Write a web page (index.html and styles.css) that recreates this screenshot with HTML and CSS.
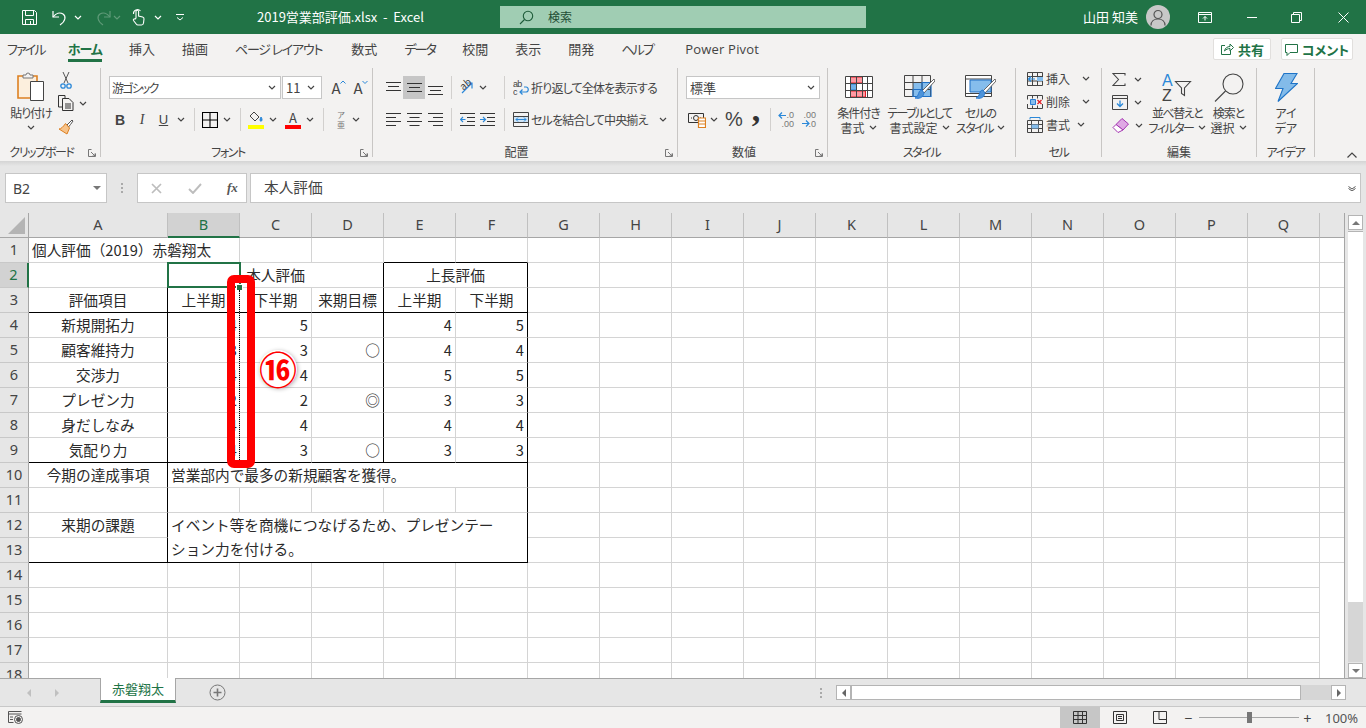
FILE: index.html
```html
<!DOCTYPE html>
<html lang="ja">
  <head>
    <meta charset="UTF-8" />
    <title>2019営業部評価.xlsx - Excel</title>
    <link rel="stylesheet" href="styles.css">
  </head>
  <body>
    <svg class="defs" width="0" height="0">
      <symbol id="chev" viewBox="0 0 8 5"><path d="M1 1l3 3 3-3" fill="none" stroke="#444" stroke-width="1.2"/></symbol>
      <symbol id="chevw" viewBox="0 0 8 5"><path d="M1 1l3 3 3-3" fill="none" stroke="#fff" stroke-width="1.2"/></symbol>
    </svg>

    <!-- タイトルバー -->
    <header class="titlebar">
      <div class="qat">
        <svg class="q-save" width="17" height="17" viewBox="0 0 17 17" fill="none" stroke="#fff"><path d="M1.5 1.5h12l2 2v12h-14z"/><path d="M4.5 1.5v5h8v-5M4.5 15.5v-5h8v5M9.5 12v3"/></svg>
        <svg class="q-undo" width="19" height="17" viewBox="0 0 19 17" fill="none" stroke="#fff" stroke-width="1.2"><path d="M2 2v6h6"/><path d="M2 8c3-4 7-5 10-3 3 2 3 7-3 11"/></svg>
        <svg class="q-c1" width="8" height="5"><use href="#chevw"/></svg>
        <svg class="q-redo" width="19" height="17" viewBox="0 0 19 17" fill="none" stroke="#5f9a78" stroke-width="1.2"><path d="M17 2v6h-6"/><path d="M17 8c-3-4-7-5-10-3-3 2-3 7 3 11"/></svg>
        <svg class="q-c2" width="8" height="5" viewBox="0 0 8 5"><path d="M1 1l3 3 3-3" fill="none" stroke="#5f9a78" stroke-width="1.2"/></svg>
        <svg class="q-touch" width="13" height="18" viewBox="0 0 13 18" fill="none" stroke="#fff" stroke-width="1.1"><path d="M1.5 6a4 4 0 0 1 7-3"/><path d="M4 10V3.5a1.3 1.3 0 0 1 2.6 0V8l4 1c1 .3 1.5 1 1.4 2l-.5 4c-.1 1-1 2-2 2H6c-.8 0-1.400-.4-1.800-1L1.500 12.500c-.6-1 .6-2.200 1.600-1.400z"/></svg>
        <svg class="q-c3" width="8" height="5"><use href="#chevw"/></svg>
        <svg class="q-more" width="8" height="8" viewBox="0 0 8 8" fill="none" stroke="#fff"><path d="M0 1.500h8M1 4.500l3 2.500 3-2.500"/></svg>
      </div>
      <div class="doc-title">2019営業部評価.xlsx&nbsp; - &nbsp;Excel</div>
      <div class="searchbox">
        <svg width="15" height="15" viewBox="0 0 15 15" fill="none" stroke="#1f5c3a" stroke-width="1.1"><circle cx="9" cy="6" r="4.700"/><path d="M5.500 9.500L1 14"/></svg>
        <span>検索</span>
      </div>
      <div class="user">山田 知美</div>
      <div class="avatar">
        <svg width="16" height="17" viewBox="0 0 16 17" fill="none" stroke="#555" stroke-width="1.2"><circle cx="8" cy="5.500" r="4"/><path d="M1 16.500c0-4 3-6.500 7-6.500s7 2.500 7 6.500"/></svg>
      </div>
      <div class="winbtns">
        <svg class="w-ribbon" width="14" height="11" viewBox="0 0 14 11" fill="none" stroke="#fff"><path d="M.5 .5h13v10H.5zM.5 2.500h13M7 8.500V4.500M5 6.500l2-2 2 2"/></svg>
        <svg class="w-min" width="10" height="1"><path d="M0 .5h10" stroke="#fff"/></svg>
        <svg class="w-max" width="11" height="11" viewBox="0 0 11 11" fill="none" stroke="#fff"><path d="M.5 2.500h8v8h-8zM2.500 2.500v-2h8v8h-2"/></svg>
        <svg class="w-close" width="11" height="11" viewBox="0 0 11 11" fill="none" stroke="#fff"><path d="M.5 .5l10 10M10.500 .5l-10 10"/></svg>
      </div>
    </header>

    <!-- タブ -->
    <nav class="tabs">
      <span class="k2">ファイル</span>
      <span class="tab-on">ホーム</span>
      <span>挿入</span>
      <span>描画</span>
      <span class="k1">ページ レイアウト</span>
      <span class="tab-su">数式</span>
      <span class="k2">データ</span>
      <span>校閲</span>
      <span>表示</span>
      <span>開発</span>
      <span class="k2">ヘルプ</span>
      <span class="tab-pp">Power Pivot</span>
      <div class="tab-right">
        <button class="share">
          <svg width="14" height="14" viewBox="0 0 14 14" fill="none" stroke="#217346"><path d="M5 3.500H1.500v9h9V9"/><path d="M4.500 9c.5-3 3-4.500 5.500-4.500V2l3.500 3.500L10 9V6.500c-2 0-4 1-5.500 2.500z"/></svg>
          共有
        </button>
        <button class="comment">
          <svg width="13" height="13" viewBox="0 0 13 13" fill="none" stroke="#217346"><path d="M.5 1.500h12v8H5l-3 3v-3H.5z"/></svg>
          コメント
        </button>
      </div>
    </nav>

    <!-- リボン -->
    <section class="ribbon">
      <div class="group g-clip">
        <div class="body body-row">
          <div class="stack w50">
            <div class="stack-ic">
              <svg width="28" height="30" viewBox="0 0 28 30"><path d="M1 4h19v22H1z" fill="#fcefdd" stroke="#dd8021" stroke-width="1.600"/><path d="M6 5V3h3a2 2 0 0 1 4 0h3v3H6z" fill="#f3f2f1" stroke="#777"/><path d="M13.500 9.500h13v19h-13z" fill="#fff" stroke="#444"/></svg>
            </div>
            <div class="stack-t">貼り付け</div>
            <div class="stack-t"><svg width="8" height="5"><use href="#chev"/></svg></div>
          </div>
          <div class="mini">
            <div class="mini-row"><svg class="ml2" width="12" height="18" viewBox="0 0 12 18" fill="none"><path d="M3 1l5 11M9 1L4 12" stroke="#555"/><circle cx="3" cy="15" r="2.200" stroke="#2b88d8" stroke-width="1.300"/><circle cx="9" cy="15" r="2.200" stroke="#2b88d8" stroke-width="1.300"/></svg></div>
            <div class="mini-row"><svg width="16" height="16" viewBox="0 0 16 16" fill="none" stroke="#333"><path d="M4 12H.5V.5H7V3"/><path d="M4.500 3.500H11l4 4v8H4.500zM7 9h6M7 11h6M7 13h6" fill="#f3f2f1"/></svg><svg class="ml5" width="8" height="5"><use href="#chev"/></svg></div>
            <div class="mini-row"><svg width="16" height="16" viewBox="0 0 16 16"><path d="M9 6l2-2 3-3 1 1-2.500 3.500L10.500 8z" fill="#fff" stroke="#555"/><path d="M7.500 4.500L11.500 9 9 15 1 10c2 0 4-2 6.500-5.500z" fill="#f7c38a" stroke="#dd8021"/></svg></div>
          </div>
        </div>
        <div class="glabel has-launch kana">クリップボード<svg class="launch" width="8" height="8" viewBox="0 0 8 8" fill="none" stroke="#777"><path d="M.5 .5h3M.5 .5v7h7v-3M3 3l4 4M4.500 7H7V4.500"/></svg></div>
      </div>

      <div class="group g-font">
        <div class="body">
          <div class="row">
            <div class="combo c-font"><span>游ゴシック</span><svg width="8" height="5"><use href="#chev"/></svg></div>
            <div class="combo c-size">11<svg width="8" height="5"><use href="#chev"/></svg></div>
            <div class="t w22 ml3 big-a">A<svg class="caret" width="6" height="4" viewBox="0 0 6 4" fill="none" stroke="#2b88d8"><path d="M.5 3.500L3 1l2.500 2.500"/></svg></div>
            <div class="t w22 big-a">A<svg class="caret" width="6" height="4" viewBox="0 0 6 4" fill="none" stroke="#2b88d8"><path d="M.5 1L3 3.500 5.500 1"/></svg></div>
          </div>
          <div class="row row2">
            <div class="t w22 fb">B</div>
            <div class="t w22 fi">I</div>
            <div class="t w21 fu">U</div>
            <div class="t w14"><svg width="8" height="5"><use href="#chev"/></svg></div>
            <i class="sep ml6"></i>
            <div class="t w17 ml6"><svg width="16" height="16" viewBox="0 0 16 16" fill="none" stroke="#000" stroke-width="1.100"><path d="M.5 .5h15v15H.5zM8 .5v15M.5 8h15"/></svg></div>
            <div class="t w18"><svg width="8" height="5"><use href="#chev"/></svg></div>
            <i class="sep ml4"></i>
            <div class="t w18 ml6 swatch">
              <svg width="14" height="12" viewBox="0 0 14 12" fill="none" stroke="#444"><path d="M5 1l5 5-4 4-5-5z"/><path d="M12 6c1 1.500 1.500 3 .5 4s-1.500-.5-1.500-1.500z" fill="#2b88d8" stroke="#2b88d8"/></svg>
              <b class="bar yellow"></b>
            </div>
            <div class="t w16"><svg width="8" height="5"><use href="#chev"/></svg></div>
            <div class="t w24 swatch"><span class="fa">A</span><b class="bar red"></b></div>
            <div class="t w10"><svg width="8" height="5"><use href="#chev"/></svg></div>
            <i class="sep ml8"></i>
            <div class="t w18 ml8 furi"><span>ア</span><span>亜</span></div>
            <div class="t w12"><svg width="8" height="5"><use href="#chev"/></svg></div>
          </div>
        </div>
        <div class="glabel has-launch kana">フォント<svg class="launch" width="8" height="8" viewBox="0 0 8 8" fill="none" stroke="#777"><path d="M.5 .5h3M.5 .5v7h7v-3M3 3l4 4M4.500 7H7V4.500"/></svg></div>
      </div>

      <div class="group g-align">
        <div class="body">
          <div class="row">
            <div class="t w20"><svg width="15" height="12" viewBox="0 0 15 12" stroke="#333"><path d="M0 .5h15M2 4.500h11M0 8.500h15"/></svg></div>
            <div class="t w22 on"><svg width="15" height="12" viewBox="0 0 15 12" stroke="#333"><path d="M0 1.500h15M2 5.500h11M0 9.500h15"/></svg></div>
            <div class="t w20"><svg class="dn" width="15" height="12" viewBox="0 0 15 12" stroke="#333"><path d="M0 3.500h15M2 7.500h11M0 11.500h15"/></svg></div>
            <i class="sep ml6"></i>
            <div class="t w18 ml6 orient"><span>ab</span><svg width="14" height="14" viewBox="0 0 14 14" fill="none" stroke="#2b88d8" stroke-width="1.200"><path d="M2 12L12 2M6.500 2H12v5.500"/></svg></div>
            <div class="t w14"><svg width="8" height="5"><use href="#chev"/></svg></div>
            <i class="sep ml14"></i>
            <div class="wide ml8">
              <svg width="16" height="17" viewBox="0 0 16 17" fill="none"><text x="0" y="8" class="ab">ab</text><text x="0" y="16" class="ab">c</text><path d="M7 13h6c3 0 3-5 0-5h-2M9.500 10.500L7 13l2.500 2.500" stroke="#2b88d8" stroke-width="1.200"/></svg>
              <span>折り返して全体を表示する</span>
            </div>
          </div>
          <div class="row row2">
            <div class="t w20"><svg width="15" height="13" viewBox="0 0 15 13" stroke="#333"><path d="M0 .5h15M0 4.500h10M0 8.500h15M0 12.500h10"/></svg></div>
            <div class="t w22"><svg width="15" height="13" viewBox="0 0 15 13" stroke="#333"><path d="M0 .5h15M2.500 4.500h10M0 8.500h15M2.500 12.500h10"/></svg></div>
            <div class="t w20"><svg width="15" height="13" viewBox="0 0 15 13" stroke="#333"><path d="M0 .5h15M5 4.500h10M0 8.500h15M5 12.500h10"/></svg></div>
            <i class="sep ml6"></i>
            <div class="t w18 ml6"><svg width="15" height="13" viewBox="0 0 15 13" fill="none"><path d="M0 .5h15M7 4.500h8M7 8.500h8M0 12.500h15" stroke="#333"/><path d="M5.500 6.500H.5M3 4L.5 6.500 3 9" stroke="#2b88d8" stroke-width="1.200"/></svg></div>
            <div class="t w22"><svg width="15" height="13" viewBox="0 0 15 13" fill="none"><path d="M0 .5h15M7 4.500h8M7 8.500h8M0 12.500h15" stroke="#333"/><path d="M0 6.500h5M3 4l2.500 2.500L3 9" stroke="#2b88d8" stroke-width="1.200"/></svg></div>
            <i class="sep ml6"></i>
            <div class="wide ml8">
              <svg width="16" height="15" viewBox="0 0 16 15" fill="none"><path d="M.5 .5h15v14H.5z" stroke="#444"/><path d="M1 4.500h14M1 10.500h14" stroke="#444"/><path d="M1 5h14v5H1z" fill="#cfe4f6"/><path d="M3 7.500h10M5 5.500l-2 2 2 2M11 5.500l2 2-2 2" stroke="#2b88d8"/></svg>
              <span>セルを結合して中央揃え</span>
              <svg class="ml9" width="8" height="5"><use href="#chev"/></svg>
            </div>
          </div>
        </div>
        <div class="glabel has-launch">配置<svg class="launch" width="8" height="8" viewBox="0 0 8 8" fill="none" stroke="#777"><path d="M.5 .5h3M.5 .5v7h7v-3M3 3l4 4M4.500 7H7V4.500"/></svg></div>
      </div>

      <div class="group g-num">
        <div class="body">
          <div class="row">
            <div class="combo c-num">標準<svg width="8" height="5"><use href="#chev"/></svg></div>
          </div>
          <div class="row row2">
            <div class="t w22"><svg width="18" height="16" viewBox="0 0 18 16" fill="none"><path d="M.5 1.500h15v9H.5z" stroke="#333"/><circle cx="8" cy="6" r="2.500" stroke="#333"/><path d="M3 6h1M12 6h1" stroke="#333"/><path d="M10.500 6h7v9.500h-7z" fill="#fff" stroke="#dd8021" stroke-width="1.200"/><path d="M11 9h6M11 12h6" stroke="#dd8021"/></svg></div>
            <div class="t w12"><svg width="8" height="5"><use href="#chev"/></svg></div>
            <div class="t w22 ml3 pct">%</div>
            <div class="t w22 comma">,</div>
            <i class="sep ml3"></i>
            <div class="t w22 ml4 dec"><span class="dec-t"><span>.0</span><span>.00</span></span><svg class="dec-a" width="9" height="9" viewBox="0 0 9 9" fill="none" stroke="#2b88d8" stroke-width="1.200"><path d="M8 4.500H1M4 1.500l-3 3 3 3"/></svg></div>
            <div class="t w22 dec"><span class="dec-t"><span>.00</span><span>.0</span></span><svg class="dec-b" width="9" height="9" viewBox="0 0 9 9" fill="none" stroke="#2b88d8" stroke-width="1.200"><path d="M1 4.500h7M5 1.500l3 3-3 3"/></svg></div>
          </div>
        </div>
        <div class="glabel has-launch">数値<svg class="launch" width="8" height="8" viewBox="0 0 8 8" fill="none" stroke="#777"><path d="M.5 .5h3M.5 .5v7h7v-3M3 3l4 4M4.500 7H7V4.500"/></svg></div>
      </div>

      <div class="group g-style">
        <div class="body body-row">
          <div class="stack w61">
            <div class="stack-ic low">
              <svg width="28" height="22" viewBox="0 0 28 22"><path d="M.5 .5h27v21H.5z" fill="#fff"/><path d="M5.500 1h12v6h-12zM5.500 15h15v6h-15z" fill="#ff9aa2" stroke="#e01b24"/><path d="M5.500 8h6v6h-6z" fill="#6fb1e8" stroke="#2b7cd3"/><path d="M.5 .5h27v21H.5zM5.500 1v20M11.500 1v20M17.500 1v20M22.500 1v20M1 7.500h26M1 14.500h26" fill="none" stroke="#444"/></svg>
            </div>
            <div class="stack-t">条件付き</div>
            <div class="stack-t ls0">書式<svg class="ml4" width="8" height="5"><use href="#chev"/></svg></div>
          </div>
          <div class="stack w61">
            <div class="stack-ic low">
              <svg width="31" height="25" viewBox="0 0 31 25"><path d="M9 7h18v15H9z" fill="#85bdec"/><path d="M.5 .5h26v21H.5zM9 1v20M18 1v20M1 7.500h26M1 14.500h26" fill="none" stroke="#444"/><path d="M18 7.500h9v14H9v-7h9z" fill="none" stroke="#1f6fc4" stroke-width="1.200"/><path d="M30 4L18 16l2 2L31 6z" fill="#fff" stroke="#666"/><path d="M18 15c-3 0-3 3-4 5-.5 1.500-2 2.500-3 3 4 1 8 0 9-5z" fill="#4d93d9" stroke="#2b7cd3"/></svg>
            </div>
            <div class="stack-t tight">テーブルとして</div>
            <div class="stack-t ls0">書式設定<svg class="ml4" width="8" height="5"><use href="#chev"/></svg></div>
          </div>
          <div class="stack w61">
            <div class="stack-ic low">
              <svg width="31" height="25" viewBox="0 0 31 25"><path d="M.5 .5h26v21H.5z" fill="#fff" stroke="#444"/><path d="M1 4h25" stroke="#444"/><path d="M5 5h21v12H5z" fill="#85bdec" stroke="#1f6fc4"/><path d="M1 18.500h26" stroke="#444"/><path d="M30 4L18 16l2 2L31 6z" fill="#fff" stroke="#666"/><path d="M18 15c-3 0-3 3-4 5-.5 1.500-2 2.500-3 3 4 1 8 0 9-5z" fill="#4d93d9" stroke="#2b7cd3"/></svg>
            </div>
            <div class="stack-t">セルの</div>
            <div class="stack-t tight">スタイル<svg class="ml4" width="8" height="5"><use href="#chev"/></svg></div>
          </div>
        </div>
        <div class="glabel kana">スタイル</div>
      </div>

      <div class="group g-cell">
        <div class="body">
          <div class="cell-row">
            <svg width="16" height="14" viewBox="0 0 16 14" fill="none"><path d="M.5 .5h15v13H.5zM.5 4.500h15M.5 9h15M5.500 .5v13M10.500 .5v13" stroke="#444"/><path d="M10 5h6v4h-6z" fill="#85bdec"/><path d="M8 7H1.500M4 4.500L1.500 7 4 9.500" stroke="#2b88d8" stroke-width="1.200"/></svg>
            <span>挿入</span><svg class="ml9" width="8" height="5"><use href="#chev"/></svg>
          </div>
          <div class="cell-row">
            <svg width="16" height="14" viewBox="0 0 16 14" fill="none"><path d="M.5 .5h15M.5 13.500h15M.5 .5v4M15.500 .5v4M.5 9v4.500M15.500 9v4.500M5.500 .5v3M10.500 .5v3M5.500 10.500v3M10.500 10.500v3" stroke="#444"/><path d="M3.500 4.500h5v5h-5z" fill="#85bdec" stroke="#2b7cd3"/><path d="M10.500 5l4 4M14.500 5l-4 4" stroke="#e01b24" stroke-width="1.300"/></svg>
            <span>削除</span><svg class="ml9" width="8" height="5"><use href="#chev"/></svg>
          </div>
          <div class="cell-row">
            <svg width="16" height="16" viewBox="0 0 16 16" fill="none"><path d="M.5 3.500h15v12H.5zM.5 7.500h15M.5 11.500h15M4.500 3.500v12M11.500 3.500v12" stroke="#444"/><path d="M4.500 7.500h7v4h-7z" fill="#85bdec"/><path d="M3 .5h10M3 .5v2M13 .5v2" stroke="#2b88d8"/></svg>
            <span>書式</span><svg class="ml4" width="8" height="5"><use href="#chev"/></svg>
          </div>
        </div>
        <div class="glabel kana">セル</div>
      </div>

      <div class="group g-edit">
        <div class="body body-row">
          <div class="edit-left">
            <div class="cell-row">
              <svg width="14" height="13" viewBox="0 0 14 13" fill="none" stroke="#444" stroke-width="1.100"><path d="M13 2.500V.5H1l5.500 6-5.500 6h12v-2"/></svg>
              <svg class="ml5" width="8" height="5"><use href="#chev"/></svg>
            </div>
            <div class="cell-row">
              <svg width="16" height="15" viewBox="0 0 16 15" fill="none"><path d="M.5 .5h15v14H.5zM.5 3.500h15" stroke="#444"/><path d="M8 5.500v6M5 8.500l3 3 3-3" stroke="#2b88d8" stroke-width="1.300"/></svg>
              <svg class="ml3" width="8" height="5"><use href="#chev"/></svg>
            </div>
            <div class="cell-row">
              <svg width="17" height="15" viewBox="0 0 17 15"><path d="M10 .5L16.500 6 11 12 4 6.500z" fill="#dfa8e4" stroke="#a333b0"/><path d="M4 6.500L1 9.500 6 14.500 11 12z" fill="#fff" stroke="#a333b0"/></svg>
              <svg class="ml3" width="8" height="5"><use href="#chev"/></svg>
            </div>
          </div>
          <div class="stack w60">
            <div class="stack-ic">
              <svg class="sort-ic" width="30" height="29" viewBox="0 0 30 29" fill="none"><text x="0" y="13" class="az blue">A</text><text x="0" y="28" class="az">Z</text><path d="M13.500 8.500h15l-6 6.500v7.500l-3-2V15z" stroke="#444" stroke-width="1.100"/></svg>
            </div>
            <div class="stack-t tight">並べ替えと</div>
            <div class="stack-t tight">フィルター<svg class="ml4" width="8" height="5"><use href="#chev"/></svg></div>
          </div>
          <div class="stack w43">
            <div class="stack-ic">
              <svg width="30" height="29" viewBox="0 0 30 29" fill="none" stroke="#444" stroke-width="1.100"><circle cx="19" cy="11" r="10"/><path d="M11.500 18L1 28.500"/></svg>
            </div>
            <div class="stack-t">検索と</div>
            <div class="stack-t ls0">選択<svg class="ml4" width="8" height="5"><use href="#chev"/></svg></div>
          </div>
        </div>
        <div class="glabel">編集</div>
      </div>

      <div class="group g-idea">
        <div class="body body-row">
          <div class="stack w58">
            <div class="stack-ic">
              <svg width="23" height="29" viewBox="0 0 23 29"><path d="M9 .5h13l-6 10h6.500L3 28.500l5-13H.5z" fill="#83bbe9" stroke="#1f74c7" stroke-width="1.100"/></svg>
            </div>
            <div class="stack-t ls0">アイ</div>
            <div class="stack-t ls0">デア</div>
          </div>
        </div>
        <div class="glabel kana">アイデア</div>
      </div>

      <svg class="collapse" width="10" height="6" viewBox="0 0 10 6" fill="none" stroke="#444" stroke-width="1.200"><path d="M.5 5.500L5 1l4.500 4.500"/></svg>
    </section>

    <!-- 数式バー -->
    <section class="formula">
      <div class="namebox"><span>B2</span><i class="tri"></i></div>
      <div class="fdots"><i></i><i></i><i></i></div>
      <div class="fbtns">
        <svg width="11" height="11" viewBox="0 0 11 11" stroke="#bdbdbd" stroke-width="1.700"><path d="M1 1l9 9M10 1l-9 9"/></svg>
        <svg width="14" height="11" viewBox="0 0 14 11" fill="none" stroke="#bdbdbd" stroke-width="1.900"><path d="M1 6l4 4 8-9"/></svg>
        <span class="fx">fx</span>
      </div>
      <div class="finput"><span>本人評価</span><svg width="8" height="5" viewBox="0 0 8 5"><path d="M.5 .5L4 3l3.500-2.500M.5 2.500L4 5l3.500-2.500" fill="none" stroke="#555"/></svg></div>
    </section>

    <!-- シート -->
    <section class="workarea">
      <div class="sheet">
        <table class="grid">
          <colgroup>
            <col class="col-rh"><col class="col-a">
            <col class="col"><col class="col"><col class="col"><col class="col"><col class="col">
            <col class="col"><col class="col"><col class="col"><col class="col"><col class="col"><col class="col">
            <col class="col"><col class="col"><col class="col"><col class="col"><col class="col"><col class="col">
          </colgroup>
          <thead>
            <tr><th class="corner"><i></i></th><th>A</th><th class="sel-col">B</th><th>C</th><th>D</th><th>E</th><th>F</th><th>G</th><th>H</th><th>I</th><th>J</th><th>K</th><th>L</th><th>M</th><th>N</th><th>O</th><th>P</th><th>Q</th><th></th></tr>
          </thead>
          <tbody>
            <tr><th>1</th><td colspan="2">個人評価（2019）赤磐翔太</td><td></td><td></td><td class="bb"></td><td class="bb"></td><td></td><td></td><td></td><td></td><td></td><td></td><td></td><td></td><td></td><td></td><td></td><td></td></tr>
            <tr><th class="sel-row">2</th><td></td><td colspan="3" class="c br">本人評価</td><td colspan="2" class="c br">上長評価</td><td></td><td></td><td></td><td></td><td></td><td></td><td></td><td></td><td></td><td></td><td></td><td></td></tr>
            <tr><th>3</th><td class="c bb br">評価項目</td><td class="c bb">上半期</td><td class="c bb">下半期</td><td class="c bb br">来期目標</td><td class="c bb">上半期</td><td class="c bb br">下半期</td><td></td><td></td><td></td><td></td><td></td><td></td><td></td><td></td><td></td><td></td><td></td><td></td></tr>
            <tr><th>4</th><td class="c br">新規開拓力</td><td class="r">4</td><td class="r">5</td><td class="r br"></td><td class="r">4</td><td class="r br">5</td><td></td><td></td><td></td><td></td><td></td><td></td><td></td><td></td><td></td><td></td><td></td><td></td></tr>
            <tr><th>5</th><td class="c br">顧客維持力</td><td class="r">3</td><td class="r">3</td><td class="r br">○</td><td class="r">4</td><td class="r br">4</td><td></td><td></td><td></td><td></td><td></td><td></td><td></td><td></td><td></td><td></td><td></td><td></td></tr>
            <tr><th>6</th><td class="c br">交渉力</td><td class="r">4</td><td class="r">4</td><td class="r br"></td><td class="r">5</td><td class="r br">5</td><td></td><td></td><td></td><td></td><td></td><td></td><td></td><td></td><td></td><td></td><td></td><td></td></tr>
            <tr><th>7</th><td class="c br">プレゼン力</td><td class="r">2</td><td class="r">2</td><td class="r br">◎</td><td class="r">3</td><td class="r br">3</td><td></td><td></td><td></td><td></td><td></td><td></td><td></td><td></td><td></td><td></td><td></td><td></td></tr>
            <tr><th>8</th><td class="c br">身だしなみ</td><td class="r">4</td><td class="r">4</td><td class="r br"></td><td class="r">4</td><td class="r br">4</td><td></td><td></td><td></td><td></td><td></td><td></td><td></td><td></td><td></td><td></td><td></td><td></td></tr>
            <tr><th>9</th><td class="c bb br">気配り力</td><td class="r bb">4</td><td class="r bb">3</td><td class="r bb br">○</td><td class="r bb">3</td><td class="r bb br">3</td><td></td><td></td><td></td><td></td><td></td><td></td><td></td><td></td><td></td><td></td><td></td><td></td></tr>
            <tr><th>10</th><td class="c br">今期の達成事項</td><td colspan="5" class="br">営業部内で最多の新規顧客を獲得。</td><td></td><td></td><td></td><td></td><td></td><td></td><td></td><td></td><td></td><td></td><td></td><td></td></tr>
            <tr><th>11</th><td class="br"></td><td></td><td></td><td></td><td></td><td class="br"></td><td></td><td></td><td></td><td></td><td></td><td></td><td></td><td></td><td></td><td></td><td></td><td></td></tr>
            <tr><th>12</th><td class="c br">来期の課題</td><td colspan="5" rowspan="2" class="br bb">イベント等を商機につなげるため、プレゼンテー<br>ション力を付ける。</td><td></td><td></td><td></td><td></td><td></td><td></td><td></td><td></td><td></td><td></td><td></td><td></td></tr>
            <tr><th>13</th><td class="bb br"></td><td></td><td></td><td></td><td></td><td></td><td></td><td></td><td></td><td></td><td></td><td></td><td></td></tr>
            <tr><th>14</th><td></td><td></td><td></td><td></td><td></td><td></td><td></td><td></td><td></td><td></td><td></td><td></td><td></td><td></td><td></td><td></td><td></td></tr>
            <tr><th>15</th><td></td><td></td><td></td><td></td><td></td><td></td><td></td><td></td><td></td><td></td><td></td><td></td><td></td><td></td><td></td><td></td><td></td></tr>
            <tr><th>16</th><td></td><td></td><td></td><td></td><td></td><td></td><td></td><td></td><td></td><td></td><td></td><td></td><td></td><td></td><td></td><td></td><td></td></tr>
            <tr><th>17</th><td></td><td></td><td></td><td></td><td></td><td></td><td></td><td></td><td></td><td></td><td></td><td></td><td></td><td></td><td></td><td></td><td></td></tr>
            <tr><th>18</th><td></td><td></td><td></td><td></td><td></td><td></td><td></td><td></td><td></td><td></td><td></td><td></td><td></td><td></td><td></td><td></td><td></td></tr>
          </tbody>
        </table>
        <!-- 列幅ドラッグの表示と注釈 -->
        <div class="cursor-box"></div>
        <div class="fill-handle"></div>
        <div class="drag-line"></div>
        <div class="red-frame"></div>
        <div class="step">⑯</div>
      </div>
      <div class="vscroll">
        <div class="sb-btn"><i class="tri up"></i></div>
        <div class="sb-thumb"></div>
        <div class="sb-btn"><i class="tri"></i></div>
      </div>
    </section>

    <!-- シートタブ -->
    <section class="sheetbar">
      <div class="nav-arrows"><i class="arrow-l"></i><i class="arrow-r"></i></div>
      <div class="sheet-tab">赤磐翔太</div>
      <svg class="addsheet" width="17" height="17" viewBox="0 0 17 17" fill="none" stroke="#777"><circle cx="8.500" cy="8.500" r="7.500"/><path d="M8.500 4.500v8M4.500 8.500h8" stroke-width="1.600"/></svg>
      <div class="sb-dots"><i></i><i></i><i></i></div>
      <div class="hscroll">
        <div class="hs-btn"><i class="arrow-l dark"></i></div>
        <div class="hs-thumb"></div>
        <div class="hs-btn"><i class="arrow-r dark"></i></div>
      </div>
    </section>

    <!-- ステータスバー -->
    <footer class="statusbar">
      <svg class="macro" width="15" height="13" viewBox="0 0 15 13" fill="none" stroke="#555"><path d="M.5 .5h13M.5 3h13M.5 .5v11h5M2 6h3M2 8.500h3"/><circle cx="10.500" cy="8.500" r="4"/><circle cx="10.500" cy="8.500" r="2" fill="#555"/></svg>
      <div class="views">
        <div class="view on"><svg width="14" height="13" viewBox="0 0 14 13" fill="none" stroke="#333"><path d="M.5 .5h13v12H.5zM.5 4.500h13M.5 8.500h13M5 .5v12M9.500 .5v12"/></svg></div>
        <div class="view"><svg width="14" height="13" viewBox="0 0 14 13" fill="none" stroke="#333"><path d="M.5 .5h13v12H.5zM3.500 3.500h7v6h-7zM5 5.500h4M5 7.500h4"/></svg></div>
        <div class="view"><svg width="14" height="13" viewBox="0 0 14 13" fill="none" stroke="#333"><path d="M.5 .5h13v12H.5zM6 .5v8h7.500"/></svg></div>
      </div>
      <div class="zoom">
        <span class="z-btn">−</span>
        <div class="slider"><i></i></div>
        <span class="z-btn">+</span>
      </div>
      <div class="pct-t">100%</div>
    </footer>
  </body>
</html>
```

FILE: styles.css
```css
* {
  box-sizing: border-box;
}
html,
body {
  margin: 0;
  height: 100%;
}
body {
  width: 1366px;
  height: 728px;
  overflow: hidden;
  display: flex;
  flex-direction: column;
  background-color: #f3f2f1;
  color: #444;
  font-family: "Noto Sans CJK JP", "Noto Sans", sans-serif;
  font-size: 12px;
}
svg {
  display: block;
  flex: none;
}
.defs {
  position: absolute;
}

/* title bar */
.titlebar {
  height: 34px;
  flex: none;
  display: flex;
  align-items: center;
  background-color: #217346;
  color: #fff;
  font-size: 13px;
}
.qat {
  width: 257px;
  display: flex;
  align-items: center;
  padding-left: 21px;
}
.q-undo { margin-left: 13px; }
.q-c1 { margin-left: 4px; }
.q-redo { margin-left: 11px; }
.q-c2 { margin-left: 1px; }
.q-touch { margin-left: 11px; }
.q-c3 { margin-left: 9px; }
.q-more { margin-left: 14px; }
.doc-title {
  width: 243px;
  padding-bottom: 2px;
  white-space: nowrap;
}
.searchbox {
  width: 366px;
  height: 22px;
  display: flex;
  align-items: center;
  gap: 14px;
  padding-left: 19px;
  background-color: #a0cdb3;
  color: #1f4e35;
  font-size: 12px;
}
.searchbox span { padding-bottom: 2px; }
.user {
  margin-left: 217px;
  width: 63px;
  padding-bottom: 2px;
  white-space: nowrap;
}
.avatar {
  width: 24px;
  height: 24px;
  border-radius: 50%;
  background-color: #c8c8c8;
  display: flex;
  align-items: center;
  justify-content: center;
}
.winbtns {
  display: flex;
  align-items: center;
}
.w-ribbon { margin-left: 28px; }
.w-min { margin-left: 35px; }
.w-max { margin-left: 34px; }
.w-close { margin-left: 36px; }

/* tabs */
.tabs {
  height: 32px;
  flex: none;
  display: flex;
  align-items: center;
  gap: 27px;
  padding: 0 0 3px 7px;
  font-size: 13px;
  font-feature-settings: "palt";
  white-space: nowrap;
}
.k1 { letter-spacing: -1.2px; }
.k2 { letter-spacing: -1.8px; }
.tab-on {
  position: relative;
  margin-left: -4px;
  font-weight: 700;
  letter-spacing: -1px;
  color: #217346;
}
.tab-on::after {
  content: "";
  position: absolute;
  left: 0;
  right: 0;
  bottom: -4px;
  height: 3px;
  background-color: #217346;
}
.tab-su { margin-left: 2px; }
.tab-pp {
  font-family: "Open Sans", sans-serif;
  font-size: 13px;
  letter-spacing: 0.2px;
  margin-left: 5px;
}
.tab-right {
  position: absolute;
  left: 1213px;
  top: 38px;
  display: flex;
  gap: 10px;
}
.tab-right button {
  height: 22px;
  display: flex;
  align-items: center;
  justify-content: center;
  gap: 4px;
  padding: 0;
  background-color: #fff;
  border: 1px solid #e1dfdd;
  border-radius: 2px;
  color: #217346;
  font-family: inherit;
  font-size: 13px;
  font-weight: 700;
  font-feature-settings: "palt";
}
.share { width: 58px; }
.comment { width: 72px; }

/* ribbon */
.ribbon {
  position: relative;
  height: 95px;
  flex: none;
  display: flex;
  padding-top: 2px;
  font-feature-settings: "palt";
  white-space: nowrap;
}
.group {
  height: 89px;
  display: flex;
  flex-direction: column;
  border-right: 1px solid #c8c6c4;
}
.g-clip { width: 101px; }
.g-font { width: 272px; }
.g-align { width: 305px; }
.g-num { width: 150px; }
.g-style { width: 188px; }
.g-cell { width: 86px; }
.g-edit { width: 155px; }
.g-idea { width: 58px; }
.body {
  flex: 1;
  min-height: 0;
}
.g-font .body,
.g-align .body,
.g-num .body {
  padding: 8px 0 0 8px;
}
.g-align .body { padding-left: 10px; }
.body-row {
  display: flex;
}
.glabel {
  position: relative;
  height: 14px;
  margin-bottom: -2px;
  text-align: center;
  line-height: 14px;
}
.glabel.has-launch { padding-right: 17px; }
.glabel.kana { letter-spacing: -1.4px; }
.launch {
  position: absolute;
  right: 4px;
  top: 4px;
}
.row {
  display: flex;
  align-items: center;
  height: 23px;
}
.row2 { margin-top: 9px; }
.t {
  height: 23px;
  display: flex;
  align-items: center;
  justify-content: center;
  flex: none;
}
.t.on { background-color: #c6c6c6; }
.w10 { width: 10px; }
.w12 { width: 12px; }
.w14 { width: 14px; }
.w16 { width: 16px; }
.w17 { width: 17px; }
.w18 { width: 18px; }
.w20 { width: 20px; }
.w21 { width: 21px; }
.w22 { width: 22px; }
.w24 { width: 24px; }
.w43 { width: 43px; }
.w50 { width: 50px; }
.w58 { width: 58px; }
.w60 { width: 60px; }
.w61 { width: 61px; }
.ml2 { margin-left: 2px; }
.ml3 { margin-left: 3px; }
.ml4 { margin-left: 4px; }
.ml5 { margin-left: 5px; }
.ml6 { margin-left: 6px; }
.ml8 { margin-left: 8px; }
.ml9 { margin-left: 9px; }
.ml14 { margin-left: 14px; }
.sep {
  width: 1px;
  height: 23px;
  flex: none;
  background-color: #d2d0ce;
}
.combo {
  height: 23px;
  display: flex;
  align-items: center;
  justify-content: space-between;
  padding: 0 4px 0 2px;
  background-color: #fff;
  border: 1px solid #c6c6c6;
}
.c-font { width: 172px; font-size: 12px; }
.c-font span { letter-spacing: -1.8px; }
.c-size {
  width: 40px;
  margin-left: 1px;
  padding: 0 6px 0 3px;
  font-size: 13px;
}
.c-num {
  width: 134px;
  padding-left: 3px;
  font-size: 13px;
}
.big-a {
  position: relative;
  font-size: 15px;
}
.caret {
  position: absolute;
  right: 1px;
  top: 4px;
}
.fb { font-family: "Liberation Sans", sans-serif; font-weight: 700; font-size: 14px; }
.fi { font-family: "Liberation Serif", serif; font-style: italic; font-size: 14px; }
.fu { font-family: "Liberation Sans", sans-serif; font-size: 13px; text-decoration: underline; }
.swatch {
  position: relative;
  flex-direction: column;
  justify-content: flex-start;
  padding-top: 3px;
}
.fa {
  font-size: 13px;
  line-height: 14px;
}
.bar {
  position: absolute;
  left: 50%;
  bottom: 2px;
  width: 16px;
  height: 4px;
  margin-left: -8px;
}
.yellow { background-color: #ffff00; }
.red { background-color: #ff0000; }
.furi {
  flex-direction: column;
  font-size: 8px;
  line-height: 10px;
  color: #777;
}
.orient {
  position: relative;
}
.orient span {
  position: absolute;
  left: 1px;
  top: 0;
  font-size: 10px;
  transform: rotate(-40deg);
}
.dn { margin-top: 2px; }
.wide {
  display: flex;
  align-items: center;
  gap: 2px;
  font-size: 12px;
  letter-spacing: -0.8px;
}
.ab {
  font-family: "Liberation Sans", sans-serif;
  font-size: 9px;
  fill: #444;
}
.pct {
  font-family: "Liberation Sans", sans-serif;
  font-size: 20px;
}
.comma {
  font-family: "Liberation Serif", serif;
  font-weight: 700;
  font-size: 34px;
  padding-bottom: 20px;
  color: #333;
}
.dec {
  position: relative;
}
.dec-t {
  display: flex;
  flex-direction: column;
  align-items: flex-end;
  width: 100%;
  padding-right: 3px;
  font-family: "Liberation Sans", sans-serif;
  font-size: 9px;
  line-height: 9px;
  color: #777;
}
.dec-a,
.dec-b {
  position: absolute;
  left: 3px;
  top: 3px;
}
.dec-b { top: 11px; left: 4px; }
.stack {
  display: flex;
  flex-direction: column;
  align-items: center;
  flex: none;
}
.stack-ic {
  height: 32px;
  margin-top: 2px;
  margin-bottom: 3px;
  display: flex;
  align-items: flex-end;
}
.stack-ic.low { align-items: center; padding-top: 2px; }
.sort-ic { overflow: visible; }
.stack-t {
  height: 15px;
  display: flex;
  align-items: center;
  line-height: 15px;
  font-size: 12px;
  letter-spacing: -1px;
}
.stack-t.tight { letter-spacing: -1.5px; }
.stack-t.ls0 { letter-spacing: 0; }
.g-clip .body { padding-left: 6px; }
.mini {
  margin-left: 2px;
  display: flex;
  flex-direction: column;
}
.mini-row {
  height: 23.500px;
  display: flex;
  align-items: center;
}
.g-cell .body { padding-left: 11px; margin-top: -1px; }
.cell-row {
  height: 23px;
  display: flex;
  align-items: center;
  gap: 3px;
  font-size: 12px;
}
.edit-left {
  width: 45px;
  padding-left: 10px;
}
.az {
  font-family: "Liberation Sans", sans-serif;
  font-size: 16px;
  fill: #444;
}
.az.blue { fill: #2b88d8; }
.collapse {
  position: absolute;
  left: 1347px;
  top: 86px;
}

/* formula bar */
.formula {
  height: 52px;
  flex: none;
  display: flex;
  align-items: flex-start;
  padding: 12px 5px 0;
  background: linear-gradient(#d4d4d4, #e6e6e6 5px);
}
.namebox {
  width: 102px;
  height: 30px;
  display: flex;
  align-items: center;
  justify-content: space-between;
  padding: 0 5px 0 7px;
  background-color: #fff;
  border: 1px solid #c6c6c6;
  font-family: "Noto Sans", sans-serif;
  font-size: 14px;
}
.tri {
  width: 0;
  height: 0;
  border-left: 4px solid transparent;
  border-right: 4px solid transparent;
  border-top: 4px solid #777;
}
.tri.up {
  border-top: 0;
  border-bottom: 4px solid #777;
}
.fdots {
  width: 30px;
  height: 30px;
  display: flex;
  flex-direction: column;
  align-items: center;
  justify-content: center;
  gap: 2px;
}
.fdots i,
.sb-dots i {
  width: 2px;
  height: 2px;
  background-color: #aaa;
}
.fbtns {
  width: 110px;
  height: 30px;
  display: flex;
  align-items: center;
  gap: 26px;
  padding-left: 13px;
  background-color: #fff;
  border: 1px solid #c6c6c6;
}
.fx {
  margin-left: -1px;
  font-family: "Liberation Serif", serif;
  font-style: italic;
  font-weight: 700;
  font-size: 13px;
  color: #555;
}
.finput {
  width: 1111px;
  height: 30px;
  margin-left: 3px;
  display: flex;
  align-items: center;
  justify-content: space-between;
  padding: 0 4px 0 13px;
  background-color: #fff;
  border: 1px solid #c6c6c6;
  font-size: 14.670px;
  color: #444;
}
.finput span { padding-bottom: 3px; }

/* sheet */
.workarea {
  height: 465px;
  flex: none;
  display: flex;
  background-color: #e6e6e6;
}
.sheet {
  position: relative;
  width: 1345px;
  overflow: hidden;
  border-right: 1px solid #a6a6a6;
}
.grid {
  table-layout: fixed;
  width: 1392px;
  border-collapse: separate;
  border-spacing: 0;
  background-color: #fff;
  font-size: 14.670px;
  color: #2a2a2a;
}
.col-rh { width: 29px; }
.col-a { width: 139px; }
.col { width: 72px; }
.grid th {
  padding: 0;
  font-family: "Noto Sans", "Noto Sans CJK JP", sans-serif;
  font-size: 14.500px;
  font-weight: 400;
  line-height: 23px;
  vertical-align: top;
  color: #444;
  background-color: #e6e6e6;
  text-align: center;
}
.grid thead th {
  height: 25px;
  border-right: 1px solid #c0c0c0;
  border-bottom: 1px solid #a6a6a6;
}
.grid tbody th {
  height: 25px;
  border-right: 1px solid #a6a6a6;
  border-bottom: 1px solid #c8c8c8;
}
.grid .corner {
  position: relative;
  border-right-color: #a6a6a6;
}
.corner i {
  position: absolute;
  left: 8px;
  top: 4px;
  width: 17px;
  height: 17px;
  background-color: #b4b4b4;
  clip-path: polygon(100% 0, 100% 100%, 0 100%);
}
.grid .sel-col {
  background-color: #d2d2d2;
  color: #217346;
  border-bottom: 2px solid #217346;
}
.grid .sel-row {
  background-color: #d2d2d2;
  color: #217346;
  border-right: 2px solid #217346;
}
.grid td {
  height: 25px;
  padding: 0 3px;
  border-right: 1px solid #d4d4d4;
  border-bottom: 1px solid #d4d4d4;
  line-height: 23px;
  vertical-align: top;
  white-space: nowrap;
  overflow: hidden;
}
.grid .c { text-align: center; }
.grid .r { text-align: right; }
.grid .bb { border-bottom: 1px solid #000; }
.grid .br { border-right: 1px solid #000; }
.grid td[rowspan] { line-height: 24px; }
/* B列の数字は赤枠の内側に少しだけ見える */
.grid td:nth-child(3).r { padding-right: 2px; }

.cursor-box {
  position: absolute;
  left: 167px;
  top: 49px;
  width: 74px;
  height: 26px;
  border: 2px solid #217346;
}
.fill-handle {
  position: absolute;
  left: 236px;
  top: 71px;
  width: 7px;
  height: 7px;
  background-color: #217346;
  border: 1px solid #fff;
}
.drag-line {
  position: absolute;
  left: 239px;
  top: 77px;
  height: 172px;
  border-left: 1px dotted #000;
}
.red-frame {
  position: absolute;
  left: 227px;
  top: 62px;
  width: 28px;
  height: 193px;
  border: 8px solid #ff0000;
  border-radius: 7px;
}
.step {
  position: absolute;
  left: 259px;
  top: 137px;
  width: 38px;
  height: 38px;
  border-radius: 50%;
  background-color: #fff;
  box-shadow: 1px 1px 4px rgba(0, 0, 0, 0.3);
  text-align: center;
  line-height: 35px;
  font-size: 38px;
  font-weight: 700;
  color: #ff0000;
}

/* scroll bars */
.vscroll {
  width: 21px;
  padding: 2px 3px 0;
  display: flex;
  flex-direction: column;
}
.sb-btn {
  width: 15px;
  height: 15px;
  flex: none;
  display: flex;
  align-items: center;
  justify-content: center;
  background-color: #fff;
  border: 1px solid #b4b4b4;
}
.sb-thumb {
  flex: 1;
  margin: 1px 0;
  background: linear-gradient(#fff 370px, #d6d6d6 370px);
  border-top: 1px solid #b4b4b4;
}

.sheetbar {
  position: relative;
  height: 29px;
  flex: none;
  display: flex;
  align-items: flex-start;
  background-color: #e6e6e6;
  border-top: 1px solid #a6a6a6;
  border-bottom: 1px solid #c8c8c8;
}
.nav-arrows {
  width: 100px;
  height: 27px;
  display: flex;
  align-items: center;
  gap: 24px;
  padding-left: 27px;
}
.arrow-l,
.arrow-r {
  width: 0;
  height: 0;
  border-top: 4px solid transparent;
  border-bottom: 4px solid transparent;
}
.arrow-l { border-right: 4px solid #c0c0c0; }
.arrow-r { border-left: 4px solid #c0c0c0; }
.arrow-l.dark { border-right-color: #666; }
.arrow-r.dark { border-left-color: #666; }
.sheet-tab {
  width: 76px;
  height: 25px;
  margin-top: -1px;
  background-color: #fff;
  border-left: 1px solid #a6a6a6;
  border-right: 1px solid #a6a6a6;
  border-bottom: 3px solid #217346;
  text-align: center;
  line-height: 22px;
  font-size: 13px;
  color: #217346;
}
.addsheet {
  margin: 5px 0 0 33px;
}
.sb-dots {
  margin: 9px 0 0 594px;
  display: flex;
  flex-direction: column;
  gap: 2px;
}
.hscroll {
  position: absolute;
  left: 836px;
  top: 6px;
  width: 510px;
  height: 15px;
  display: flex;
  background-color: #d6d6d6;
}
.hs-btn {
  width: 15px;
  height: 15px;
  flex: none;
  display: flex;
  align-items: center;
  justify-content: center;
  background-color: #fff;
  border: 1px solid #b4b4b4;
}
.hs-thumb {
  width: 450px;
  margin-left: 0;
  margin-right: 30px;
  background-color: #fff;
  border: 1px solid #b4b4b4;
}

/* status bar */
.statusbar {
  height: 21px;
  flex: 1;
  display: flex;
  align-items: center;
  padding-left: 8px;
}
.views {
  margin-left: 1037px;
  height: 100%;
  display: flex;
}
.view {
  width: 40px;
  height: 100%;
  display: flex;
  align-items: center;
  justify-content: center;
}
.view.on { background-color: #c6c6c6; }
.zoom {
  display: flex;
  align-items: center;
  margin-left: 3px;
  font-size: 14px;
}
.z-btn {
  width: 11px;
  text-align: center;
  line-height: 20px;
}
.slider {
  position: relative;
  width: 100px;
  height: 1px;
  margin: 0 3px 0 5px;
  background-color: #a6a6a6;
}
.slider i {
  position: absolute;
  left: 48px;
  top: -5px;
  width: 5px;
  height: 11px;
  background-color: #777;
}
.pct-t {
  margin-left: 12px;
  font-family: "Noto Sans", sans-serif;
  font-size: 13px;
  color: #555;
}
```
